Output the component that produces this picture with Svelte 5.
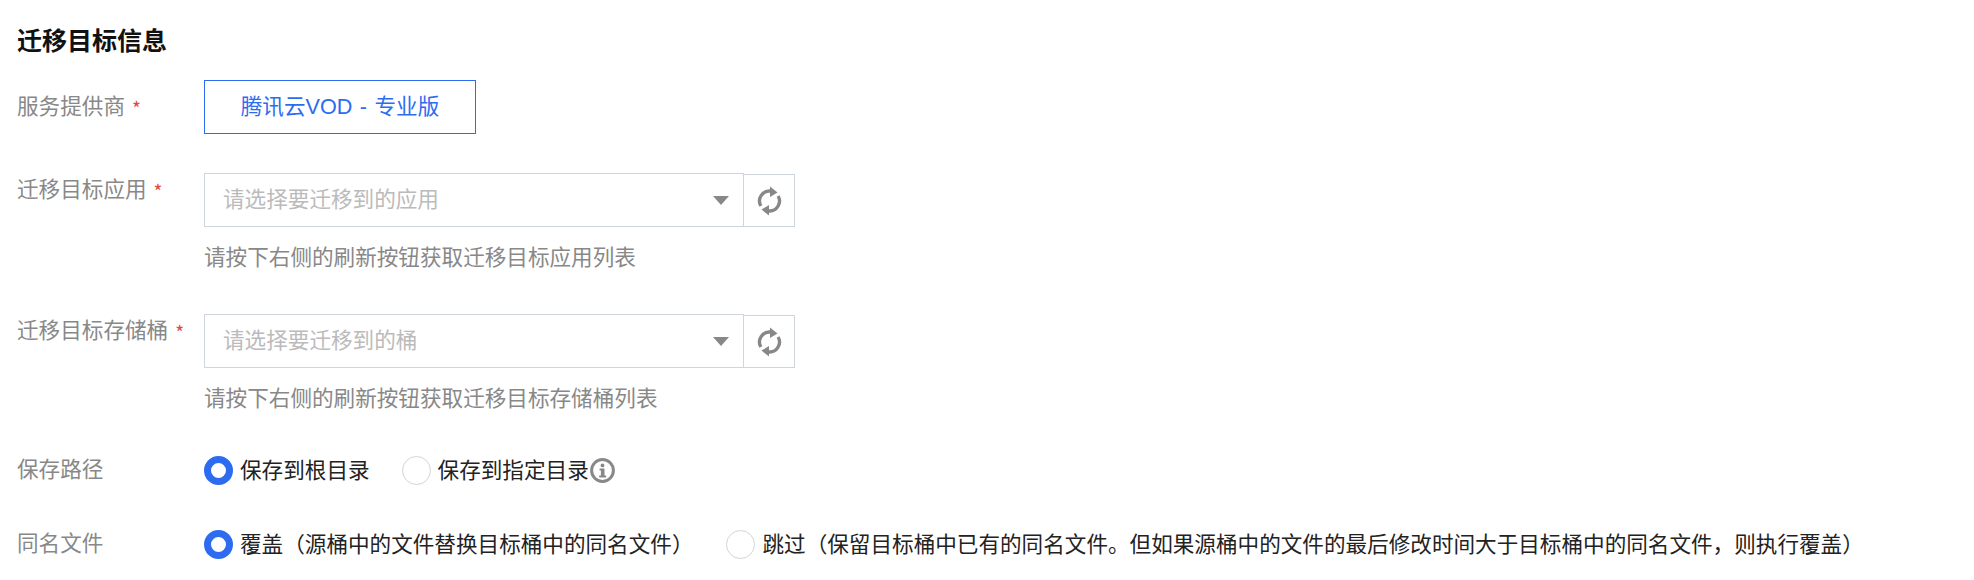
<script>
  const targets = [
    { label: '迁移目标应用', placeholder: '请选择要迁移到的应用', hint: '请按下右侧的刷新按钮获取迁移目标应用列表' },
    { label: '迁移目标存储桶', placeholder: '请选择要迁移到的桶', hint: '请按下右侧的刷新按钮获取迁移目标存储桶列表' }
  ];
</script>

<div class="page">
  <h3 class="title">迁移目标信息</h3>

  <div class="row provider">
    <div class="label">服务提供商<span class="req">*</span></div>
    <div class="value"><div class="tag">腾讯云VOD - 专业版</div></div>
  </div>

  {#each targets as t}
    <div class="row target">
      <div class="label top">{t.label}<span class="req">*</span></div>
      <div class="value">
        <div class="picker">
          <div class="select">
            <span class="placeholder">{t.placeholder}</span>
            <span class="caret"></span>
          </div>
          <div class="refresh">
            <svg width="25" height="30" viewBox="0 0 25 30">
              <path d="M3.9 20A10 10 0 0 1 13.5 5" fill="none" stroke="#888" stroke-width="3.4"/>
              <path d="M13 0.5 20.5 6.5 13 11z" fill="#888"/>
              <path d="M21.1 10A10 10 0 0 1 11.5 25" fill="none" stroke="#888" stroke-width="3.4"/>
              <path d="M12 29.5 4.5 23.5 12 19z" fill="#888"/>
            </svg>
          </div>
        </div>
        <div class="hint">{t.hint}</div>
      </div>
    </div>
  {/each}

  <div class="row radios path">
    <div class="label">保存路径</div>
    <div class="value options">
      <label class="radio"><span class="dot on"></span>保存到根目录</label>
      <label class="radio second"><span class="dot"></span>保存到指定目录
        <svg class="info" width="25" height="25" viewBox="0 0 25 25">
          <circle cx="12.5" cy="12.5" r="10.9" fill="none" stroke="#888" stroke-width="3"/>
          <circle cx="12.5" cy="7.4" r="1.9" fill="#888"/>
          <path d="M9.6 10.4h4.9v7.2h1.6v2H9.2v-2h1.7v-5.2H9.6z" fill="#888"/>
        </svg>
      </label>
    </div>
  </div>

  <div class="row radios">
    <div class="label">同名文件</div>
    <div class="value options">
      <label class="radio"><span class="dot on"></span>覆盖（源桶中的文件替换目标桶中的同名文件）</label>
      <label class="radio third"><span class="dot"></span>跳过（保留目标桶中已有的同名文件。但如果源桶中的文件的最后修改时间大于目标桶中的同名文件，则执行覆盖）</label>
    </div>
  </div>
</div>

<style>
  :global(body) {
    margin: 0;
    background: #fff;
  }

  .page {
    height: 580px;
    overflow: hidden;
    padding: 26px 0 0 17px;
    box-sizing: border-box;
    font-family: "Liberation Sans", "Noto Sans CJK SC", sans-serif;
    font-size: 21.6px;
    color: #000;
  }

  .title {
    margin: 0 0 24px;
    font-size: 25px;
    line-height: 30px;
    font-weight: 700;
    color: #111;
  }

  .row {
    display: flex;
  }

  .label {
    width: 187px;
    flex: none;
    color: #888;
    line-height: 54px;
    height: 54px;
  }

  .label.top {
    line-height: 33px;
  }

  .req {
    color: #e54545;
    margin-left: 7px;
    font-family: "Noto Sans CJK SC", sans-serif;
    font-size: 19px;
    line-height: 1;
    vertical-align: -2px;
  }

  .provider {
    margin-bottom: 39px;
  }

  .tag {
    width: 272px;
    height: 54px;
    box-sizing: border-box;
    border: 1px solid #2d6cf0;
    color: #2d6cf0;
    text-align: center;
    line-height: 52px;
    word-spacing: 1.5px;
  }

  .target {
    margin-bottom: 41px;
  }

  .picker {
    display: flex;
  }

  .select {
    width: 540px;
    height: 54px;
    box-sizing: border-box;
    border: 1px solid #cfd5de;
    padding: 0 14px 5px 18px;
    display: flex;
    align-items: center;
    justify-content: space-between;
  }

  .placeholder {
    color: #bbb;
  }

  .caret {
    width: 0;
    height: 0;
    margin-top: 5px;
    border-left: 8px solid transparent;
    border-right: 8px solid transparent;
    border-top: 9px solid #888;
  }

  .refresh {
    width: 51px;
    height: 53px;
    margin-top: 1px;
    box-sizing: border-box;
    border: 1px solid #cfd5de;
    border-left: none;
    display: flex;
    align-items: center;
    justify-content: center;
  }

  .hint {
    margin-top: 16px;
    color: #888;
    line-height: 30px;
  }

  .radios {
    height: 29px;
    align-items: center;
  }

  .radios .label {
    line-height: 27px;
    height: 29px;
  }

  .path {
    margin-bottom: 45px;
    margin-top: 42px;
  }

  .options {
    display: flex;
  }

  .radio {
    display: flex;
    align-items: center;
    line-height: 27px;
    color: #222;
  }

  .second {
    margin-left: 32px;
  }

  .third {
    margin-left: 33px;
  }

  .dot {
    width: 29px;
    height: 29px;
    box-sizing: border-box;
    border: 1px solid #cfd5de;
    border-radius: 50%;
    margin-right: 7px;
    flex: none;
  }

  .dot.on {
    border: 7.5px solid #2d6cf0;
  }

  .info {
    margin-left: 1px;
  }
</style>
